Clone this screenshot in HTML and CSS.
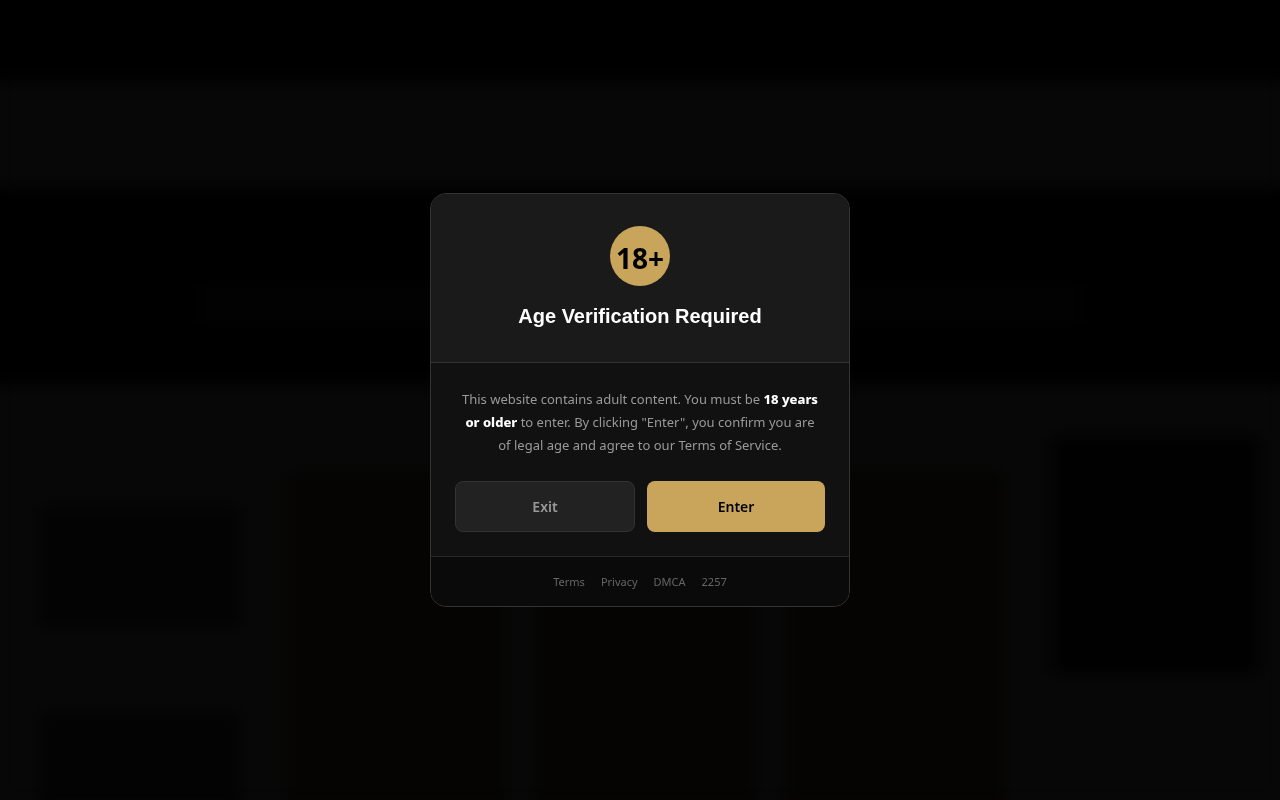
FILE: index.html
```html
<!DOCTYPE html>
<html lang="en">
<head>
<meta charset="utf-8">
<meta name="viewport" content="width=device-width, initial-scale=1">
<title>Age Verification Required</title>
<link rel="stylesheet" href="styles.css">
</head>
<body>
<div class="page" aria-hidden="true">
  <div class="page-header"></div>
  <div class="page-notice"></div>
  <div class="page-hero"><div class="hero-line"></div></div>
  <div class="page-content">
    <div class="side-list">
      <div class="thumb"></div>
      <div class="thumb"></div>
    </div>
    <div class="cards">
      <div class="card"></div>
      <div class="card"></div>
      <div class="card"></div>
    </div>
    <div class="panel"></div>
  </div>
</div>
<div class="overlay">
  <main class="modal" role="dialog" aria-modal="true" aria-labelledby="age-title">
    <header class="modal-header">
      <div class="age-badge">18+</div>
      <h1 class="modal-title" id="age-title">Age Verification Required</h1>
    </header>
    <section class="modal-body">
      <p class="modal-text">This website contains adult content. You must be <strong>18 years or older</strong> to enter. By clicking "Enter", you confirm you are of&nbsp;legal age and agree to our Terms of Service.</p>
      <div class="actions">
        <button class="btn btn-exit" type="button">Exit</button>
        <button class="btn btn-enter" type="button">Enter</button>
      </div>
    </section>
    <footer class="modal-footer">
      <a href="#terms">Terms</a>
      <a href="#privacy">Privacy</a>
      <a href="#dmca">DMCA</a>
      <a href="#2257">2257</a>
    </footer>
  </main>
</div>
</body>
</html>
```
FILE: styles.css
```css
* {
  box-sizing: border-box;
}

body {
  margin: 0;
  background: #070707;
  font-family: "Noto Sans", "Open Sans", sans-serif;
  overflow: hidden;
}

.page {
  display: flex;
  flex-direction: column;
  height: 100vh;
  overflow: hidden;
}

.page-header {
  flex: none;
  height: 80px;
  background: #000;
}

.page-notice {
  flex: none;
  height: 108px;
}

.page-hero {
  flex: none;
  height: 196px;
  padding: 96px 200px 0;
  background: #000;
}

.hero-line {
  height: 40px;
  background: #020202;
}

.page-content {
  flex: 1;
  display: grid;
  grid-template-columns: 200px 1fr 208px;
  gap: 48px;
  padding: 52px 20px 0 40px;
}

.side-list {
  display: flex;
  flex-direction: column;
  gap: 84px;
  padding-top: 70px;
}

.thumb {
  flex: none;
  height: 122px;
  background: #030303;
}

.cards {
  display: grid;
  grid-template-columns: repeat(3, 1fr);
  gap: 32px;
  padding-top: 36px;
}

.card {
  background: #050403;
}

.panel {
  height: 238px;
  background: #010101;
}

.overlay {
  position: fixed;
  inset: 0;
  display: flex;
  align-items: center;
  justify-content: center;
  padding: 16px;
  backdrop-filter: blur(8px);
}

.modal {
  width: 100%;
  max-width: 420px;
  overflow: hidden;
  border: 1px solid #333;
  border-radius: 16px;
  background: #111;
  text-align: center;
}

.modal-header {
  padding: 32px 24px;
  border-bottom: 1px solid #333;
  background: #1a1a1a;
}

.age-badge {
  display: flex;
  align-items: center;
  justify-content: center;
  width: 60px;
  height: 60px;
  margin: 0 auto 16px;
  padding-top: 3px;
  border-radius: 50%;
  background: #c9a55c;
  color: #000;
  font-size: 28px;
  font-weight: 700;
}

.modal-title {
  margin: 0;
  color: #fff;
  font-family: "Liberation Sans", Arial, sans-serif;
  font-size: 20px;
  font-weight: 700;
  line-height: 28px;
}

.modal-body {
  padding: 25px 24px 24px;
}

.modal-text {
  margin: 0 0 24px;
  color: #999;
  font-size: 13px;
  line-height: 23px;
}

.modal-text strong {
  color: #fff;
  font-weight: 800;
}

.actions {
  display: flex;
  gap: 12px;
}

.btn {
  flex: 1;
  min-height: 51px;
  padding: 14px;
  border: 0;
  border-radius: 8px;
  font-family: inherit;
  font-size: 14px;
  font-weight: 600;
  line-height: 20px;
  cursor: pointer;
}

.btn-exit {
  border: 1px solid #333;
  background: #222;
  color: #999;
}

.btn-enter {
  background: #c9a55c;
  color: #000;
}

.modal-footer {
  display: flex;
  justify-content: center;
  gap: 16px;
  padding: 16px 24px;
  border-top: 1px solid #2a2a2a;
  background: #0a0a0a;
}

.modal-footer a {
  color: #666;
  font-size: 11px;
  line-height: 17px;
  text-decoration: none;
}
```
